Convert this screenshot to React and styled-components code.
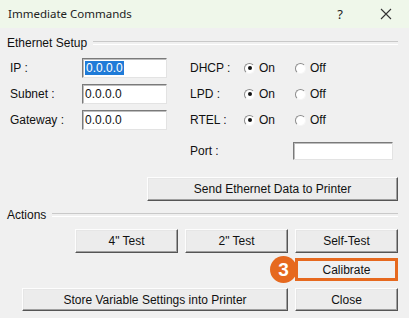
import styled, { createGlobalStyle } from 'styled-components'

const GlobalStyle = createGlobalStyle`
  html, body {
    margin: 0;
    padding: 0;
    background: #f0f0f0;
  }
  * {
    box-sizing: border-box;
  }
`

const Window = styled.div`
  width: 409px;
  height: 318px;
  background: #f0f0f0;
  font-family: 'Liberation Sans', Arial, sans-serif;
  font-size: 12px;
  color: #111;
  display: flex;
  flex-direction: column;
  overflow: hidden;
`

const TitleBar = styled.div`
  height: 28px;
  background: #eff7ea;
  display: flex;
  align-items: center;
  padding: 0 0 1px 8px;
  font-family: 'Noto Sans', 'Open Sans', sans-serif;
  font-size: 11.5px;
  color: #222;
`

const Title = styled.span`
  flex: 1;
`

const TitleButton = styled.span`
  width: 46px;
  display: flex;
  justify-content: center;
  font-size: 13px;
  color: #222;
`

const Body = styled.div`
  flex: 1;
  display: flex;
  flex-direction: column;
  padding: 0 11px 0 7px;
`

const GroupHeader = styled.div`
  display: flex;
  align-items: center;
  gap: 6px;
  height: 14px;
  margin-top: ${(p) => p.$top}px;

  &::after {
    content: '';
    flex: 1;
    height: 2px;
    border-top: 1px solid #c9c9c9;
    border-bottom: 1px solid #fff;
  }
`

const EthernetGrid = styled.div`
  display: grid;
  grid-template-columns: 75px 85px 75px 51px 1fr;
  row-gap: 6px;
  margin-top: 8px;
  align-items: center;
`

const FieldLabel = styled.span`
  padding-left: 3px;
`

const OptionLabel = styled.span`
  padding-left: 23px;
`

const TextBox = styled.div`
  height: ${(p) => p.$h || 20}px;
  width: ${(p) => p.$w || 85}px;
  background: #fff;
  border-style: solid;
  border-width: 1px;
  border-color: #7a7a7a #e3e3e3 #e3e3e3 #7a7a7a;
  box-shadow: inset 1px 1px 0 #bdbdbd;
  display: flex;
  align-items: center;
  padding-left: 2px;
  font-size: 12px;
`

const Selected = styled.span`
  background: #1f7bd8;
  color: #fff;
  padding: 0 1px;
`

const Radio = styled.label`
  display: flex;
  align-items: center;
  gap: 4px;
  padding-left: 2px;
`

const RadioDot = styled.span`
  width: 11px;
  height: 11px;
  border-radius: 50%;
  border: 1px solid;
  border-color: #8c8c8c #f6f6f6 #f6f6f6 #8c8c8c;
  background: #fff;
  display: flex;
  align-items: center;
  justify-content: center;

  &::after {
    content: '';
    width: 4px;
    height: 4px;
    border-radius: 50%;
    background: ${(p) => (p.$on ? '#111' : 'transparent')};
  }
`

const PortLabel = styled(OptionLabel)`
  grid-column: 3 / span 2;
  margin-top: 6px;
`

const PortBox = styled(TextBox)`
  margin-top: 6px;
`

const Button = styled.div`
  height: ${(p) => p.$h || 24}px;
  width: ${(p) => p.$w || 103}px;
  background: #ececec;
  border-style: solid;
  border-width: 1px;
  border-color: #fdfdfd #555 #555 #fdfdfd;
  box-shadow: inset -1px -1px 0 #a0a0a0, inset 1px 1px 0 #e6e6e6;
  display: flex;
  align-items: center;
  justify-content: center;
  font-size: 12px;
  color: #111;
`

const Row = styled.div`
  display: flex;
  justify-content: flex-end;
  gap: 7px;
  margin-top: ${(p) => p.$top}px;
`

const Highlighted = styled.div`
  position: relative;
  width: 103px;
  height: 23px;
  border: 3px solid #e6691f;
  display: flex;
  align-items: center;
  justify-content: center;
  background: #f0f0f0;
`

const StepBadge = styled.span`
  position: absolute;
  left: -28px;
  top: -5px;
  width: 27px;
  height: 27px;
  border-radius: 50%;
  background: #e6691f;
  color: #fff;
  font-family: 'Liberation Sans', Arial, sans-serif;
  font-weight: bold;
  font-size: 19px;
  display: flex;
  align-items: center;
  justify-content: center;
`

const rows = [
  { label: 'IP :', option: 'DHCP :', selected: true },
  { label: 'Subnet :', option: 'LPD :' },
  { label: 'Gateway :', option: 'RTEL :' },
]

const CloseIcon = () => (
  <svg width="12" height="12" viewBox="0 0 12 12">
    <path d="M1 1 L11 11 M11 1 L1 11" stroke="#333" strokeWidth="1.1" fill="none" />
  </svg>
)

export default function App() {
  return (
    <>
      <GlobalStyle />
      <Window>
        <TitleBar>
          <Title>Immediate Commands</Title>
          <TitleButton>?</TitleButton>
          <TitleButton>
            <CloseIcon />
          </TitleButton>
        </TitleBar>
        <Body>
          <GroupHeader $top={8}>Ethernet Setup</GroupHeader>
          <EthernetGrid>
            {rows.map((r) => (
              <>
                <FieldLabel key={r.label}>{r.label}</FieldLabel>
                <TextBox>{r.selected ? <Selected>0.0.0.0</Selected> : '0.0.0.0'}</TextBox>
                <OptionLabel>{r.option}</OptionLabel>
                <Radio>
                  <RadioDot $on />
                  On
                </Radio>
                <Radio>
                  <RadioDot />
                  Off
                </Radio>
              </>
            ))}
            <PortLabel>Port :</PortLabel>
            <PortBox $w={100} $h={18} />
          </EthernetGrid>
          <Row $top={17}>
            <Button $w={251}>Send Ethernet Data to Printer</Button>
          </Row>
          <GroupHeader $top={7}>Actions</GroupHeader>
          <Row $top={7}>
            <Button>4" Test</Button>
            <Button>2" Test</Button>
            <Button>Self-Test</Button>
          </Row>
          <Row $top={5}>
            <Highlighted>
              <StepBadge>3</StepBadge>
              Calibrate
            </Highlighted>
          </Row>
          <Row $top={7}>
            <Button $w={266} $h={23}>Store Variable Settings into Printer</Button>
            <Button $h={23}>Close</Button>
          </Row>
        </Body>
      </Window>
    </>
  )
}
